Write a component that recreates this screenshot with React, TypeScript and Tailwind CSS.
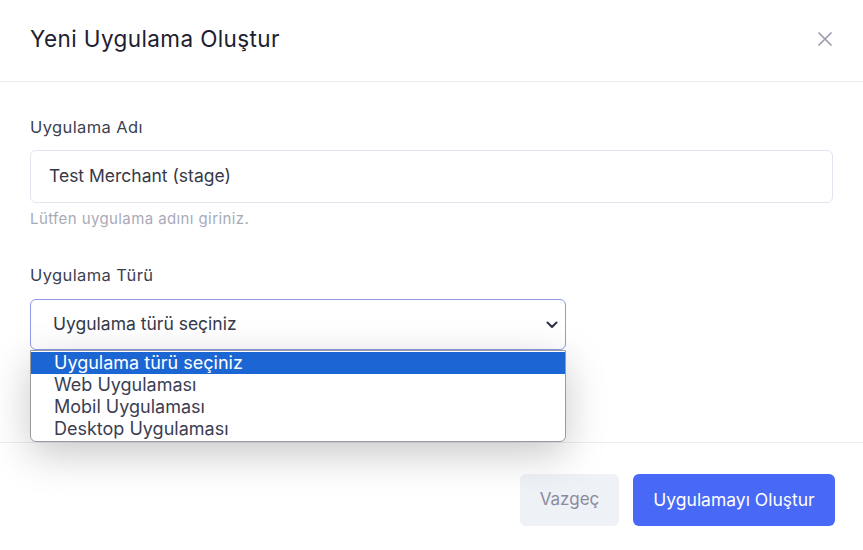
import React from 'react';

const font = { fontFamily: 'Inter, "Noto Sans", sans-serif' };

const options = ['Uygulama türü seçiniz', 'Web Uygulaması', 'Mobil Uygulaması', 'Desktop Uygulaması'];

export default function App() {
    return (
        <div className="relative w-[863px] h-[550px] bg-white overflow-hidden" style={font}>
            {/* Header */}
            <div className="h-[82px] px-[30px] flex items-center justify-between border-b border-[#ececf3]">
                <h1 className="text-[22.5px] tracking-[0.4px] text-[#1d2030] -mt-[3px]">Yeni Uygulama Oluştur</h1>
                <svg width="14" height="14" viewBox="0 0 14 14" className="mr-[1px] -mt-[3px]">
                    <path d="M1 1L13 13M13 1L1 13" stroke="#9b9cab" strokeWidth="1.7" strokeLinecap="round" />
                </svg>
            </div>

            {/* Body */}
            <div className="h-[361px] px-[30px] pt-[33px] border-b border-[#ececf3]">
                <label className="block text-[16.5px] tracking-[0.4px] leading-6 text-[#3c3f50] mb-[11px]">Uygulama Adı</label>
                <div className="h-[53px] rounded-[6px] border border-[#e4e4ee] flex items-center px-[18px] text-[17.5px] text-[#363949]">
                    Test Merchant (stage)
                </div>
                <p className="mt-[6px] text-[15px] tracking-[0.4px] leading-5 text-[#a9aab8]">Lütfen uygulama adını giriniz.</p>

                <label className="block mt-[34px] text-[16.5px] tracking-[0.4px] leading-6 text-[#3c3f50] mb-[12px]">Uygulama Türü</label>
                <div className="w-[536px] h-[51px] rounded-[6px] border border-[#8d9ae6] flex items-center justify-between pl-[22px] pr-[7px] text-[17.5px] text-[#363949]">
                    <span>Uygulama türü seçiniz</span>
                    <svg width="12" height="8" viewBox="0 0 12 8">
                        <path d="M1.5 1.5L6 6L10.5 1.5" fill="none" stroke="#2f3243" strokeWidth="2" strokeLinecap="round" strokeLinejoin="round" />
                    </svg>
                </div>
            </div>

            {/* Footer */}
            <div className="px-[28px] pt-[31px] flex justify-end gap-[14px]">
                <button className="w-[99px] h-[52px] rounded-[6px] bg-[#eef1f5] text-[17px] text-[#8a8b9f]">Vazgeç</button>
                <button className="w-[202px] h-[52px] rounded-[6px] bg-[#4868f6] text-[17.5px] text-white">Uygulamayı Oluştur</button>
            </div>

            {/* Native select dropdown */}
            <div className="absolute left-[30px] top-[350px] w-[536px] h-[92px] bg-white border border-[#9a9aa0] rounded-b-[6px] shadow-[0_12px_40px_rgba(0,0,0,0.22)] overflow-hidden pt-px">
                {options.map((o, i) => (
                    <div
                        key={o}
                        className={`h-[22px] leading-[22px] pl-[23px] text-[18px] ${i === 0 ? 'bg-[#1c66d3] text-white' : 'text-[#3b3e52]'}`}
                    >
                        {o}
                    </div>
                ))}
            </div>
        </div>
    );
}
